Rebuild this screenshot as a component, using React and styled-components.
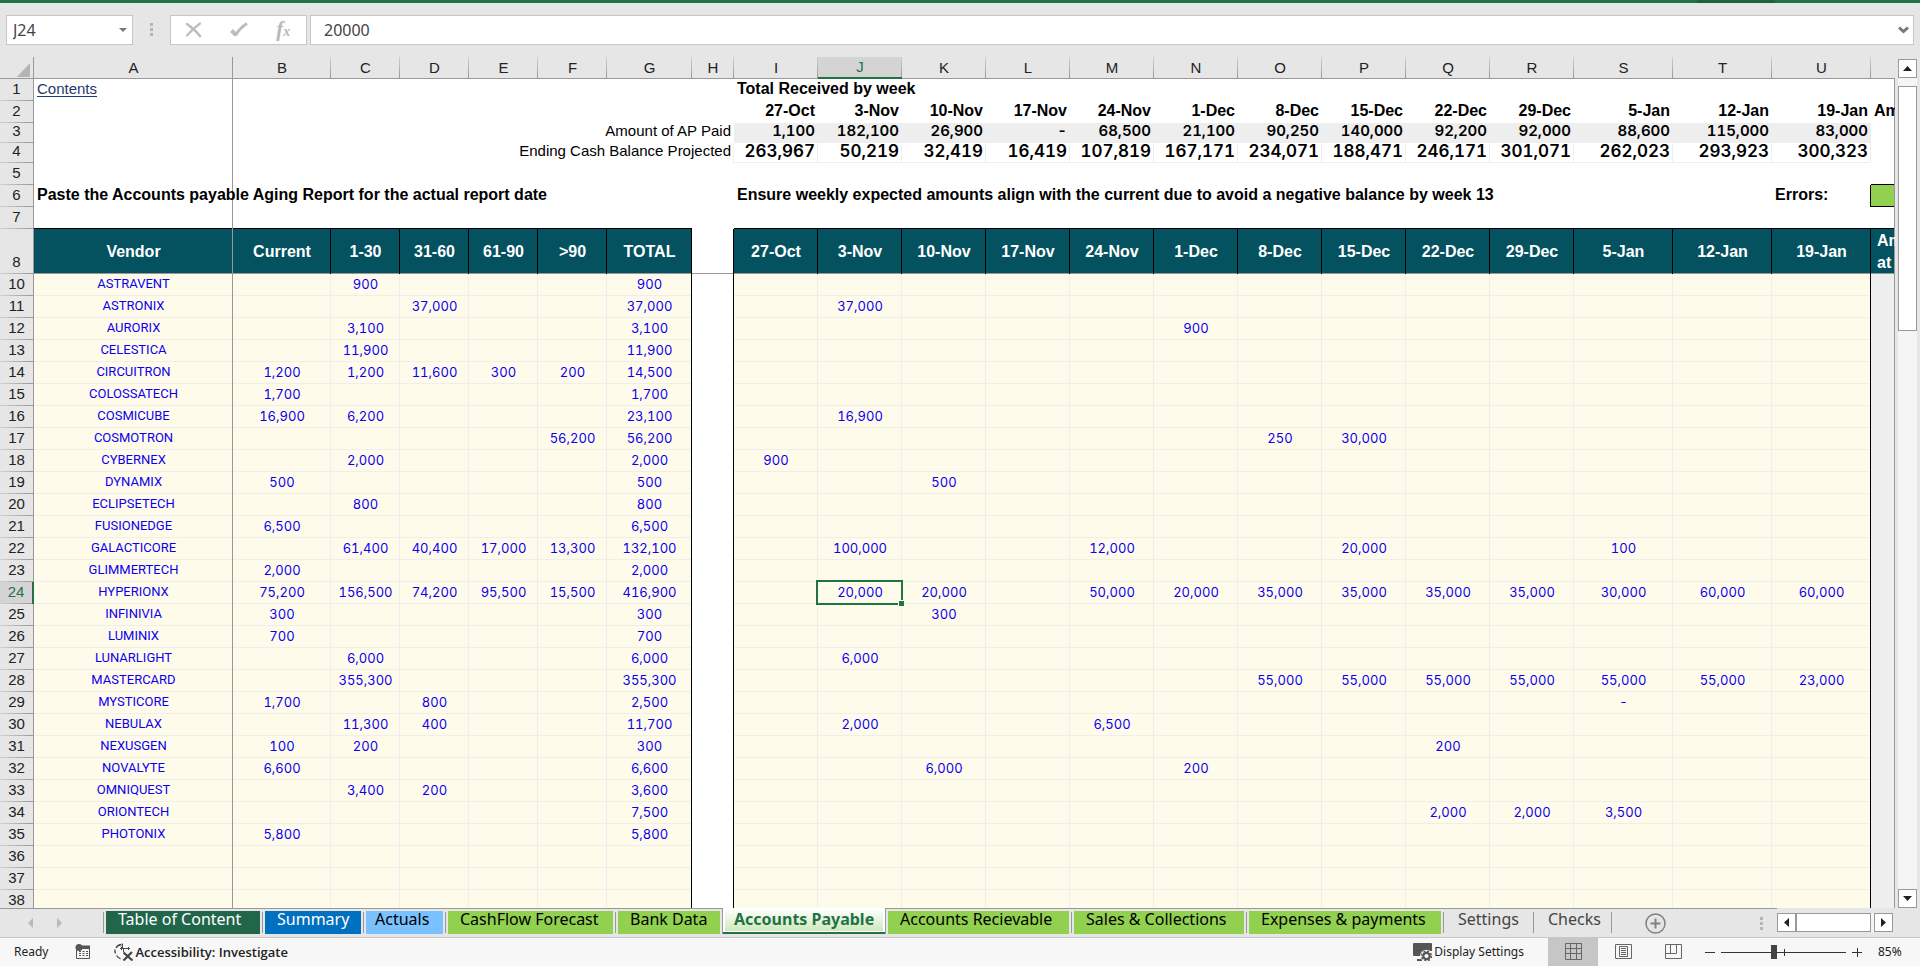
import React from "react";
import styled, { createGlobalStyle, css } from "styled-components";

const color = {
  chrome: "#e6e6e6",
  line: "#999999",
  soft: "#c6c6c6",
  green: "#217346",
  teal: "#045160",
  cream: "#fffbea",
  grid: "#eeeeee",
  lime: "#92d050",
  blue: "#0a00f0",
};

const GlobalStyle = createGlobalStyle`
  *, *::before, *::after { box-sizing: border-box; }
  body { margin: 0; background: ${color.chrome}; }
  button, input { font: inherit; color: inherit; }
  button { padding: 0; border: 0; background: none; }
`;

const Window = styled.div`
  display: flex;
  flex-direction: column;
  height: 100vh;
  overflow: hidden;
  font: 16px/16px "Noto Sans", sans-serif;
  color: #000;
`;

/* ---------- formula bar ---------- */

const RibbonEdge = styled.div`
  height: 3px;
  flex: none;
  background: ${color.green};
  display: flex;
  justify-content: flex-end;
  padding-right: 145px;
`;

const RibbonShade = styled.span`
  width: 78px;
  background: #1e6339;
`;

const FormulaBar = styled.div`
  display: flex;
  flex: none;
  height: 54px;
  padding: 12px 6px;
  font-size: 16px;
  color: #444;
`;

const Box = styled.div`
  display: flex;
  align-items: center;
  height: 30px;
  background: #fff;
  border: 1px solid ${color.soft};
`;

const NameBox = styled(Box)`
  width: 127px;
  padding: 0 5px;
`;

const FormulaBox = styled(Box)`
  flex: 1;
  margin-left: 3px;
  padding: 0 4px 0 12px;
`;

const BarInput = styled.input`
  flex: 1;
  min-width: 0;
  padding: 0 1px;
  border: 0;
  outline: 0;
  background: none;
`;

const BarActions = styled(Box)`
  width: 137px;
  padding-right: 2px;
  justify-content: space-around;
`;

const IconButton = styled.button`
  display: flex;
  align-items: center;
  justify-content: center;
`;

const Dots = styled.span`
  display: grid;
  align-content: center;
  justify-content: center;
  gap: 2px;
  width: ${(p) => p.$width}px;
  height: ${(p) => p.$height}px;
  &::before, &::after, i { content: ""; width: 3px; height: 3px; background: #b4b4b4; }
`;

/* ---------- sheet ---------- */

const SheetArea = styled.div`
  display: flex;
  flex: 1;
  min-height: 0;
`;

const Viewport = styled.div`
  flex: 1;
  min-width: 0;
  overflow: hidden;
`;

const Grid = styled.table`
  width: 100%;
  table-layout: fixed;
  border-collapse: separate;
  border-spacing: 0;
  font: 15px/16px "Liberation Sans", sans-serif;
  background: #fff;
`;

const ColHead = styled.th`
  height: 22px;
  padding: 0;
  font-weight: 400;
  color: ${(p) => (p.$active ? color.green : "#222")};
  border-bottom: ${(p) => (p.$active ? `2px solid ${color.green}` : `1px solid ${color.line}`)};
  background:
    ${(p) => (p.$last ? "" : `linear-gradient(${p.$frozen ? color.line : "#d0d0d0"}, ${color.line}) right / 1px 100% no-repeat`)}
    ${(p) => (p.$active ? "#d4d4d4" : color.chrome)};
`;

const RowHead = styled.th`
  height: ${(p) => p.$height}px;
  padding: 0 0 4px;
  vertical-align: bottom;
  font-weight: 400;
  color: ${(p) => (p.$active ? color.green : "#222")};
  border-right: ${(p) => (p.$active ? `2px solid ${color.green}` : `1px solid ${color.line}`)};
  background:
    linear-gradient(90deg, #d0d0d0, ${color.line}) bottom / 100% 1px no-repeat
    ${(p) => (p.$active ? "#d4d4d4" : color.chrome)};
`;

const Corner = styled(ColHead)`
  svg { display: block; margin: 4px 4px 0 auto; }
`;

const edge = (c, place) => `linear-gradient(${c}, ${c}) ${place} no-repeat,`;

/* Cell rules are painted as backgrounds so that they stay whole where they cross. */
const Cell = styled.td`
  padding: 0 3px 4px;
  vertical-align: bottom;
  white-space: nowrap;
  text-align: ${(p) => p.$align || "left"};
  background:
    ${(p) => (p.$right ? edge(p.$right, "right / 1px 100%") : "")}
    ${(p) => (p.$bottom ? edge(p.$bottom, "bottom / 100% 1px") : "")}
    ${(p) => p.$fill || "transparent"};
  ${(p) => p.$bold && css`font-size: 16px; font-weight: 700;`}
  ${(p) => p.$clip && css`overflow: hidden;`}
`;

const PaidCell = styled(Cell)`
  font: 600 15px/16px Inter, sans-serif;
  font-variant-numeric: tabular-nums;
`;

const BalanceCell = styled(Cell)`
  font: 600 17px/16px Inter, sans-serif;
  font-variant-numeric: tabular-nums;
`;

const HeadCell = styled(Cell)`
  padding: 0;
  vertical-align: middle;
  color: #fff;
  font-size: 16px;
  font-weight: 700;
`;

const HeadLines = styled.div`
  padding-left: 6px;
  line-height: 22px;
  text-align: left;
`;

const VendorCell = styled(Cell)`
  font: 13px/16px Roboto, sans-serif;
  color: ${color.blue};
`;

const NumCell = styled(Cell)`
  padding: 0 0 4px;
  font: 13px/16px Inter, sans-serif;
  font-variant-numeric: tabular-nums;
  color: ${color.blue};
  ${(p) => p.$selected && css`position: relative; z-index: 1;`}
`;

const Selection = styled.span`
  position: absolute;
  inset: -2px -1px -1px -2px;
  border: 2px solid ${color.green};
  &::after {
    content: "";
    position: absolute;
    right: -3px;
    bottom: -3px;
    width: 6px;
    height: 6px;
    background: ${color.green};
    border: solid #fff;
    border-width: 1px 0 0 1px;
  }
`;

const SheetLink = styled.a`
  color: #1f3a6e;
  text-decoration: underline;
  text-underline-offset: 2px;
`;

/* ---------- scroll bars ---------- */

const VScroll = styled.div`
  display: flex;
  flex-direction: column;
  flex: none;
  width: 19px;
  margin: 2px 3px 0;
  background: #f5f5f5;
`;

const VThumb = styled.div`
  height: 245px;
  margin-top: 8px;
  background: #fff;
  border: 1px solid ${color.line};
`;

const ScrollButton = styled(IconButton)`
  flex: none;
  width: 19px;
  height: 19px;
  background: #fff;
  border: 1px solid ${color.line};
`;

const Filler = styled.span`
  flex: 1;
`;

const HScroll = styled.div`
  display: flex;
  width: 116px;
  height: 19px;
  margin: 5px 27px 0 0;
  background: #f5f5f5;
`;

const HThumb = styled.div`
  width: 75px;
  background: #fff;
  border: 1px solid ${color.line};
`;

/* ---------- sheet tabs ---------- */

const TabBar = styled.div`
  display: flex;
  align-items: flex-start;
  flex: none;
  height: 29px;
`;

const TabStrip = styled.div`
  display: flex;
  flex: 1;
  height: 29px;
  border-top: 1px solid ${color.line};
  padding-right: 10px;
`;

const TabNav = styled.div`
  display: flex;
  justify-content: space-between;
  width: 104px;
  padding: 0 42px 0 28px;
  margin-top: 1px;
  height: 26px;
`;

const TabSlot = styled.div`
  display: flex;
  width: ${(p) => p.$width}px;
  height: 23px;
  margin-top: 2px;
  padding: 0 3px 0 2px;
  background: linear-gradient(${color.line}, ${color.line}) right 1px / 1px 21px no-repeat;
  ${(p) => p.$first && css`
    width: ${p.$width + 1}px;
    margin-left: -1px;
    padding-left: 3px;
    background:
      linear-gradient(${color.line}, ${color.line}) right 1px / 1px 21px no-repeat,
      linear-gradient(${color.line}, ${color.line}) left 1px / 1px 21px no-repeat;
  `}
  ${(p) => p.$active && css`
    height: 26px;
    margin: -1px 0 0 -1px;
    padding: 1px 2px 0;
    width: ${p.$width + 1}px;
    background: #fff;
    border: solid ${color.line};
    border-width: 0 1px;
    box-shadow: inset 0 -2px ${color.green};
  `}
`;

const Tab = styled.button`
  flex: 1;
  display: flex;
  height: 23px;
  padding-left: ${(p) => p.$inset || 12}px;
  line-height: 16px;
  white-space: nowrap;
  color: ${(p) => p.$text || "#000"};
  background: ${(p) => p.$fill || "none"};
  ${(p) => p.$active && css`
    padding-top: 2px;
    height: 22px;
    font-weight: 700;
  `}
`;

const AddSheet = styled(IconButton)`
  width: 21px;
  height: 26px;
  margin-left: 33px;
  padding-top: 2px;
`;

/* ---------- status bar ---------- */

const StatusBar = styled.div`
  display: flex;
  align-items: center;
  flex: none;
  height: 29px;
  padding-left: 14px;
  border-top: 1px solid ${color.soft};
  background: #f7f7f7;
  font-size: 12px;
  color: #222;
`;

const StatusButton = styled.button`
  display: flex;
  align-items: center;
  gap: 1px;
  margin-left: ${(p) => p.$gap}px;
  white-space: nowrap;
  ${(p) => p.$bold && css`font: 600 13px/16px "Open Sans", sans-serif;`}
`;

const Views = styled.div`
  display: flex;
  margin-left: 24px;
`;

const ViewButton = styled(IconButton)`
  width: 50px;
  height: 29px;
  margin-top: -1px;
  background: ${(p) => (p.$active ? color.soft : "none")};
`;

const ZoomSlider = styled.input`
  appearance: none;
  width: 125px;
  height: 14px;
  margin: 0 5px;
  background:
    linear-gradient(#333, #333) left center / 100% 1px no-repeat,
    linear-gradient(#333, #333) 63px center / 1px 7px no-repeat;
  &::-webkit-slider-thumb {
    appearance: none;
    width: 6px;
    height: 14px;
    background: #444;
  }
`;

const ZoomLevel = styled.span`
  width: 57px;
  padding-left: 15px;
`;

/* ---------- icons ---------- */

const Arrow = ({ dir, w = 9, h = 5, fill = "#222" }) => {
  const d = { down: "M0 0H10L5 10Z", up: "M0 10H10L5 0Z", left: "M10 0V10L0 5Z", right: "M0 0V10L10 5Z" }[dir];
  return (
    <svg width={w} height={h} viewBox="0 0 10 10" preserveAspectRatio="none" aria-hidden="true">
      <path d={d} fill={fill} />
    </svg>
  );
};

const CancelIcon = () => (
  <svg width="18" height="16" viewBox="0 0 18 16" fill="none" stroke="#bdbdbd" strokeLinecap="round">
    <path d="M2 2C6 5 11 9 15 14" strokeWidth="2.6" />
    <path d="M15 1.500C10 5 6 9 2 13.500" strokeWidth="2.2" />
  </svg>
);

const CheckIcon = () => (
  <svg width="18" height="16" viewBox="0 0 18 16" fill="none" stroke="#bdbdbd">
    <path d="M1.500 8.500L6 13" strokeWidth="4" />
    <path d="M5.500 13.500C8 9 12 4.500 17 1.500" strokeWidth="3" />
  </svg>
);

const Fx = styled.span`
  font: italic 700 21px/20px "Liberation Serif", serif;
  color: #b8b8b8;
  small { font-size: 14px; }
`;

const MacroIcon = () => (
  <svg width="16" height="16" viewBox="0 0 16 16">
    <path d="M2.500 4.500H14.500V14.500H1.500V6" fill="none" stroke="#555" />
    <path d="M6 1.500H15V5H6Z" fill="#555" />
    <circle cx="4" cy="3.500" r="3.500" fill="#555" />
    <path d="M4 7.500H6M7.500 7.500H9.500M11 7.500H13M4 9.500H6M7.500 9.500H9.500M11 9.500H13M4 11.500H6M7.500 11.500H9.500M11 11.500H13" stroke="#555" />
  </svg>
);

const AccessIcon = () => (
  <svg width="20" height="18" viewBox="0 0 20 18" fill="none" stroke="#444">
    <path d="M7.500 1.500A7 7 0 0 0 2 5M1 6.500A7 7 0 0 0 1.500 10.500M2.500 12.500A7 7 0 0 0 6.500 15.500" strokeWidth="1.300" />
    <path d="M8.500 .5V5.500M7 3.500L8.500 5.500M6.500 5.500H15.500M8 4L6.500 5.500L8 7M14 4L15.500 5.500L14 7M9.500 6V9" />
    <path d="M9.500 9.500L18.500 17.500M18 9L9.500 17.500" strokeWidth="2.200" />
  </svg>
);

const DisplayIcon = () => (
  <svg width="20" height="18" viewBox="0 0 20 18">
    <path d="M1 0H18Q19 0 19 1V8H10L8 13H1Q0 13 0 12V1Q0 0 1 0Z" fill="#555" />
    <path d="M4 16H9V18H4Z" fill="#555" />
    <circle cx="13.500" cy="13" r="6.300" fill="#f7f7f7" />
    <circle cx="13.500" cy="13" r="3.200" fill="none" stroke="#555" strokeWidth="2.200" />
    <circle cx="13.500" cy="13" r="4.800" fill="none" stroke="#555" strokeWidth="1.600" strokeDasharray="2 1.770" />
  </svg>
);

const NormalIcon = () => (
  <svg width="17" height="17" viewBox="0 0 17 17" fill="none" stroke="#666">
    <path d="M.5.5H16.500V16.500H.5ZM.5 5.500H16.500M.5 10.500H16.500M5.500.5V16.500M11.500.5V16.500" />
  </svg>
);

const PageIcon = () => (
  <svg width="17" height="15" viewBox="0 0 17 15" fill="none" stroke="#666">
    <path d="M.5.5H16.500V14.500H.5ZM4.500 2.500H12.500V12.500H4.500ZM6 4.500H11M6 6.500H11M6 8.500H11M6 10.500H11" />
  </svg>
);

const BreakIcon = () => (
  <svg width="17" height="15" viewBox="0 0 17 15" fill="none" stroke="#666">
    <path d="M.5.5H16.500V14.500H.5ZM5.500.5V9.500M11.500.5V9.500M.5 9.500H11.500" />
  </svg>
);

const PlusCircle = () => (
  <svg width="21" height="21" viewBox="0 0 21 21" fill="none" stroke="#808080">
    <circle cx="10.500" cy="10.500" r="9.500" strokeWidth="1.500" />
    <path d="M5.500 10.500H15.500M10.500 5.500V15.500" strokeWidth="2" />
  </svg>
);

const Sign = ({ plus }) => (
  <svg width="12" height="11" viewBox="0 0 12 11" stroke="#333">
    <path d={plus ? "M1 5.500H11M6.500 1V10" : "M1 5.500H11"} />
  </svg>
);

/* ---------- data ---------- */

const widths = { A: 199, B: 98, C: 69, D: 69, E: 69, F: 69, G: 85, H: 42, I: 84, J: 84, K: 84, L: 84, M: 84, N: 84, O: 84, P: 84, Q: 84, R: 84, S: 99, T: 99, U: 99 };
const letters = Object.keys(widths);
const weeks = [
  ["I", "27-Oct", "1,100", "263,967"],
  ["J", "3-Nov", "182,100", "50,219"],
  ["K", "10-Nov", "26,900", "32,419"],
  ["L", "17-Nov", "-", "16,419"],
  ["M", "24-Nov", "68,500", "107,819"],
  ["N", "1-Dec", "21,100", "167,171"],
  ["O", "8-Dec", "90,250", "234,071"],
  ["P", "15-Dec", "140,000", "188,471"],
  ["Q", "22-Dec", "92,200", "246,171"],
  ["R", "29-Dec", "92,000", "301,071"],
  ["S", "5-Jan", "88,600", "262,023"],
  ["T", "12-Jan", "115,000", "293,923"],
  ["U", "19-Jan", "83,000", "300,323"],
];
const headings = { A: "Vendor", B: "Current", C: "1-30", D: "31-60", E: "61-90", F: ">90", G: "TOTAL" };
weeks.forEach(([l, d]) => { headings[l] = d; });

const vendors = [
  { A: "ASTRAVENT", C: "900", G: "900" },
  { A: "ASTRONIX", D: "37,000", G: "37,000", J: "37,000" },
  { A: "AURORIX", C: "3,100", G: "3,100", N: "900" },
  { A: "CELESTICA", C: "11,900", G: "11,900" },
  { A: "CIRCUITRON", B: "1,200", C: "1,200", D: "11,600", E: "300", F: "200", G: "14,500" },
  { A: "COLOSSATECH", B: "1,700", G: "1,700" },
  { A: "COSMICUBE", B: "16,900", C: "6,200", G: "23,100", J: "16,900" },
  { A: "COSMOTRON", F: "56,200", G: "56,200", O: "250", P: "30,000" },
  { A: "CYBERNEX", C: "2,000", G: "2,000", I: "900" },
  { A: "DYNAMIX", B: "500", G: "500", K: "500" },
  { A: "ECLIPSETECH", C: "800", G: "800" },
  { A: "FUSIONEDGE", B: "6,500", G: "6,500" },
  { A: "GALACTICORE", C: "61,400", D: "40,400", E: "17,000", F: "13,300", G: "132,100", J: "100,000", M: "12,000", P: "20,000", S: "100" },
  { A: "GLIMMERTECH", B: "2,000", G: "2,000" },
  { A: "HYPERIONX", B: "75,200", C: "156,500", D: "74,200", E: "95,500", F: "15,500", G: "416,900", J: "20,000", K: "20,000", M: "50,000", N: "20,000", O: "35,000", P: "35,000", Q: "35,000", R: "35,000", S: "30,000", T: "60,000", U: "60,000" },
  { A: "INFINIVIA", B: "300", G: "300", K: "300" },
  { A: "LUMINIX", B: "700", G: "700" },
  { A: "LUNARLIGHT", C: "6,000", G: "6,000", J: "6,000" },
  { A: "MASTERCARD", C: "355,300", G: "355,300", O: "55,000", P: "55,000", Q: "55,000", R: "55,000", S: "55,000", T: "55,000", U: "23,000" },
  { A: "MYSTICORE", B: "1,700", D: "800", G: "2,500", S: "-" },
  { A: "NEBULAX", C: "11,300", D: "400", G: "11,700", J: "2,000", M: "6,500" },
  { A: "NEXUSGEN", B: "100", C: "200", G: "300", Q: "200" },
  { A: "NOVALYTE", B: "6,600", G: "6,600", K: "6,000", N: "200" },
  { A: "OMNIQUEST", C: "3,400", D: "200", G: "3,600" },
  { A: "ORIONTECH", G: "7,500", Q: "2,000", R: "2,000", S: "3,500" },
  { A: "PHOTONIX", B: "5,800", G: "5,800" },
  {}, {}, {},
];

const tabs = [
  { name: "Table of Content", width: 159, fill: "#21664b", text: "#fff" },
  { name: "Summary", width: 101, fill: "#0070c0", text: "#fff" },
  { name: "Actuals", width: 82, fill: "#7ac1ff", inset: 9 },
  { name: "CashFlow Forecast", width: 170, fill: color.lime },
  { name: "Bank Data", width: 107, fill: color.lime },
  { name: "Accounts Payable", width: 163, fill: "linear-gradient(#ffffff, #cfe8b8)", text: color.green, active: true, inset: 9 },
  { name: "Accounts Recievable", width: 186, fill: color.lime },
  { name: "Sales & Collections", width: 175, fill: color.lime },
  { name: "Expenses & payments", width: 197, fill: color.lime },
  { name: "Settings", width: 90, text: "#444" },
  { name: "Checks", width: 78, text: "#444" },
];

const blackRight = new Set(["G", "H", "U"]);
const rightLine = (l) => (l === "A" || l === "V" ? color.line : undefined);

/* Blank cells for the given letters, keeping the freeze line after column A. */
const blanks = (cols, extra) =>
  cols.map((l) => <Cell key={l} $right={rightLine(l)} {...(extra ? extra(l) : {})} />);

const between = (a, b) => [...letters, "V"].filter((l) => l >= a && l <= b);

function TopRows() {
  return (
    <>
      <tr>
        <RowHead scope="row" $height={22}>1</RowHead>
        <Cell $right={color.line}><SheetLink href="#contents">Contents</SheetLink></Cell>
        {blanks(between("B", "H"))}
        <Cell $bold>Total Received by week</Cell>
        {blanks(between("J", "V"))}
      </tr>
      <tr>
        <RowHead scope="row" $height={22}>2</RowHead>
        {blanks(between("A", "H"))}
        {weeks.map(([l, d]) => <Cell key={l} $bold $align="right">{d}</Cell>)}
        <Cell $bold $clip $right={color.line}>Am</Cell>
      </tr>
      <tr>
        <RowHead scope="row" $height={20}>3</RowHead>
        {blanks(["A"])}
        <Cell colSpan={7} $align="right">Amount of AP Paid</Cell>
        {weeks.map(([l, , v]) => (
          <PaidCell key={l} $align="right" $fill={color.grid}>{v}</PaidCell>
        ))}
        {blanks(["V"])}
      </tr>
      <tr>
        <RowHead scope="row" $height={20}>4</RowHead>
        {blanks(["A"])}
        <Cell colSpan={7} $align="right" $right={color.grid}>Ending Cash Balance Projected</Cell>
        {weeks.map(([l, , , v]) => (
          <BalanceCell key={l} $align="right" $bottom={color.grid} $right={color.grid}>{v}</BalanceCell>
        ))}
        {blanks(["V"])}
      </tr>
      <tr>
        <RowHead scope="row" $height={22}>5</RowHead>
        {blanks(between("A", "V"), (l) => (l === "V" ? { $bottom: "#000" } : {}))}
      </tr>
      <tr>
        <RowHead scope="row" $height={22}>6</RowHead>
        <Cell $bold $right={color.line}>Paste the Accounts payable Aging Report for the actual report date</Cell>
        {blanks(between("B", "H"))}
        <Cell $bold>Ensure weekly expected amounts align with the current due to avoid a negative balance by week 13</Cell>
        {blanks(between("J", "T"))}
        <Cell $bold $right="#000">Errors:</Cell>
        <Cell $fill={color.lime} $bottom="#000" $right={color.line} />
      </tr>
      <tr>
        <RowHead scope="row" $height={22}>7</RowHead>
        {blanks(between("A", "V"), (l) => (l === "H" ? {} : { $bottom: "#000" }))}
      </tr>
      <tr>
        <RowHead scope="row" $height={45}>8</RowHead>
        {letters.map((l) => (
          <HeadCell
            key={l}
            $align="center"
            $fill={l === "H" ? "#fff" : color.teal}
            $right={l === "A" ? color.line : "#000"}
            $bottom={color.line}
          >
            {headings[l]}
          </HeadCell>
        ))}
        <HeadCell $clip $fill={color.teal} $right={color.line} $bottom={color.line}>
          <HeadLines>Am<br />at</HeadLines>
        </HeadCell>
      </tr>
    </>
  );
}

function VendorRow({ data, number }) {
  const activeRow = number === 24;
  return (
    <tr>
      <RowHead scope="row" $height={22} $active={activeRow}>{number}</RowHead>
      <VendorCell $align="center" $fill={color.cream} $right={color.line} $bottom={color.grid}>{data.A}</VendorCell>
      {letters.slice(1).map((l) =>
        l === "H" ? (
          <Cell key={l} $right="#000" />
        ) : (
          <NumCell
            key={l}
            $align="center"
            $fill={color.cream}
            $right={blackRight.has(l) ? "#000" : color.grid}
            $bottom={color.grid}
            $selected={activeRow && l === "J"}
          >
            {data[l]}
            {activeRow && l === "J" && <Selection />}
          </NumCell>
        )
      )}
      <Cell $fill={color.grid} $right={color.line} />
    </tr>
  );
}

function Sheet() {
  return (
    <SheetArea>
      <Viewport>
        <Grid>
          <colgroup>
            <col width="34" />
            {letters.map((l) => <col key={l} width={widths[l]} />)}
            <col />
          </colgroup>
          <thead>
            <tr>
              <Corner $frozen>
                <svg width="13" height="14" viewBox="0 0 13 14" aria-label="Select all"><path d="M13 0V14H0Z" fill="#b4b4b4" /></svg>
              </Corner>
              {letters.map((l) => (
                <ColHead key={l} scope="col" $active={l === "J"} $frozen={l === "A"}>{l}</ColHead>
              ))}
              <ColHead $last />
            </tr>
          </thead>
          <tbody>
            <TopRows />
            {vendors.map((v, i) => <VendorRow key={i} data={v} number={i + 10} />)}
          </tbody>
        </Grid>
      </Viewport>
      <VScroll>
        <ScrollButton aria-label="Scroll up"><Arrow dir="up" /></ScrollButton>
        <VThumb />
        <Filler />
        <ScrollButton aria-label="Scroll down"><Arrow dir="down" /></ScrollButton>
      </VScroll>
    </SheetArea>
  );
}

export default function App() {
  return (
    <Window>
      <GlobalStyle />
      <RibbonEdge><RibbonShade /></RibbonEdge>
      <FormulaBar>
        <NameBox>
          <BarInput aria-label="Name box" defaultValue="J24" />
          <IconButton aria-label="Name list"><Arrow dir="down" w={8} h={4} fill="#777" /></IconButton>
        </NameBox>
        <Dots $width={37} $height={28}><i /></Dots>
        <BarActions>
          <IconButton aria-label="Cancel"><CancelIcon /></IconButton>
          <IconButton aria-label="Enter"><CheckIcon /></IconButton>
          <IconButton aria-label="Insert function"><Fx>f<small>x</small></Fx></IconButton>
        </BarActions>
        <FormulaBox>
          <BarInput aria-label="Formula" defaultValue="20000" />
          <IconButton aria-label="Expand formula bar">
            <svg width="11" height="8" viewBox="0 0 11 8" fill="none" stroke="#777" strokeWidth="3"><path d="M1 1.500L5.500 5.500L10 1.500" /></svg>
          </IconButton>
        </FormulaBox>
      </FormulaBar>

      <Sheet />

      <TabBar>
        <TabStrip>
          <TabNav>
            <IconButton aria-label="Previous sheets"><Arrow dir="left" w={5} h={10} fill="#b8b8b8" /></IconButton>
            <IconButton aria-label="Next sheets"><Arrow dir="right" w={5} h={10} fill="#b8b8b8" /></IconButton>
          </TabNav>
          {tabs.map((t, i) => (
            <TabSlot key={t.name} $width={t.width} $first={i === 0} $active={t.active}>
              <Tab $fill={t.fill} $text={t.text} $inset={t.inset} $active={t.active}>{t.name}</Tab>
            </TabSlot>
          ))}
          <AddSheet aria-label="New sheet"><PlusCircle /></AddSheet>
          <Filler />
          <Dots $width={12} $height={29}><i /></Dots>
        </TabStrip>
        <HScroll>
          <ScrollButton aria-label="Scroll left"><Arrow dir="left" w={5} h={9} /></ScrollButton>
          <HThumb />
          <Filler />
          <ScrollButton aria-label="Scroll right"><Arrow dir="right" w={5} h={9} /></ScrollButton>
        </HScroll>
      </TabBar>

      <StatusBar>
        <span>Ready</span>
        <StatusButton $gap={27} aria-label="Record macro"><MacroIcon /></StatusButton>
        <StatusButton $gap={23} $bold><AccessIcon />Accessibility: Investigate</StatusButton>
        <Filler />
        <StatusButton $gap={0}><DisplayIcon />Display Settings</StatusButton>
        <Views>
          <ViewButton $active aria-label="Normal view"><NormalIcon /></ViewButton>
          <ViewButton aria-label="Page layout"><PageIcon /></ViewButton>
          <ViewButton aria-label="Page break preview"><BreakIcon /></ViewButton>
        </Views>
        <StatusButton $gap={6} aria-label="Zoom out"><Sign /></StatusButton>
        <ZoomSlider type="range" min="0" max="100" defaultValue="42" aria-label="Zoom" />
        <StatusButton $gap={0} aria-label="Zoom in"><Sign plus /></StatusButton>
        <ZoomLevel>85%</ZoomLevel>
      </StatusBar>
    </Window>
  );
}
